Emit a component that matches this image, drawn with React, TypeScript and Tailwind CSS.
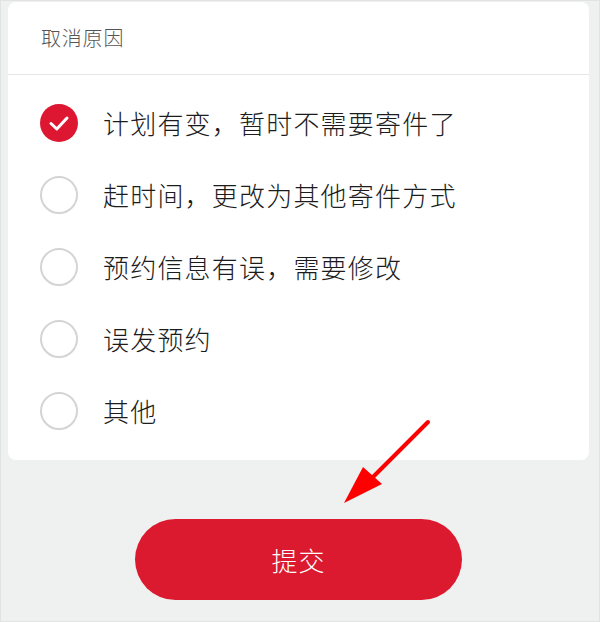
import { useState } from 'react';

const reasons = [
  '计划有变，暂时不需要寄件了',
  '赶时间，更改为其他寄件方式',
  '预约信息有误，需要修改',
  '误发预约',
  '其他',
];

const font = { fontFamily: '"Noto Sans CJK SC", "Noto Sans", sans-serif' };

const Radio = ({ checked }: { checked: boolean }) =>
  checked ? (
    <svg width="38" height="38" viewBox="0 0 38 38" className="shrink-0">
      <circle cx="19" cy="19" r="19" fill="#dd1731" />
      <path d="M11 19.5 L16.8 25 L27 14" fill="none" stroke="#fff" strokeWidth="3" strokeLinecap="round" strokeLinejoin="round" />
    </svg>
  ) : (
    <span className="w-[38px] h-[38px] shrink-0 rounded-full border-2 border-[#d4d4d4]" />
  );

const App = () => {
  const [selected, setSelected] = useState(0);

  return (
    <div className="relative w-[600px] h-[622px] bg-[#eff1f0] border border-[#e1e3e2] pl-[7px] pr-[10px] pt-[1px]" style={font}>
      <div className="bg-white rounded-[8px]">
        <div className="h-[72px] flex items-center pl-[33px] text-[20px] tracking-[0.8px] text-[#555] font-light">
          取消原因
        </div>
        <div className="h-px bg-[#e6e6e6]" />
        <div className="pt-[12px] pb-[13px]">
          {reasons.map((r, i) => (
            <div
              key={r}
              onClick={() => setSelected(i)}
              className="h-[72px] flex items-center pl-[32px] gap-[25px] cursor-pointer"
            >
              <Radio checked={selected === i} />
              <span className="text-[26px] tracking-[1.2px] text-[#1c1c1c] leading-none font-light">{r}</span>
            </div>
          ))}
        </div>
      </div>

      <div className="flex justify-center pt-[59px]">
        <button className="w-[327px] h-[81px] rounded-full bg-[#dc1a2f] text-white text-[26px] tracking-[1px] font-light">
          提交
        </button>
      </div>

      {/* annotation arrow */}
      <svg className="absolute left-0 top-0 pointer-events-none" width="600" height="622">
        <line x1="427" y1="421" x2="360" y2="488" stroke="#ff0000" strokeWidth="4" strokeLinecap="round" />
        <polygon points="343,502 362,466 381,483" fill="#ff0000" />
      </svg>
    </div>
  );
};

export default App;
